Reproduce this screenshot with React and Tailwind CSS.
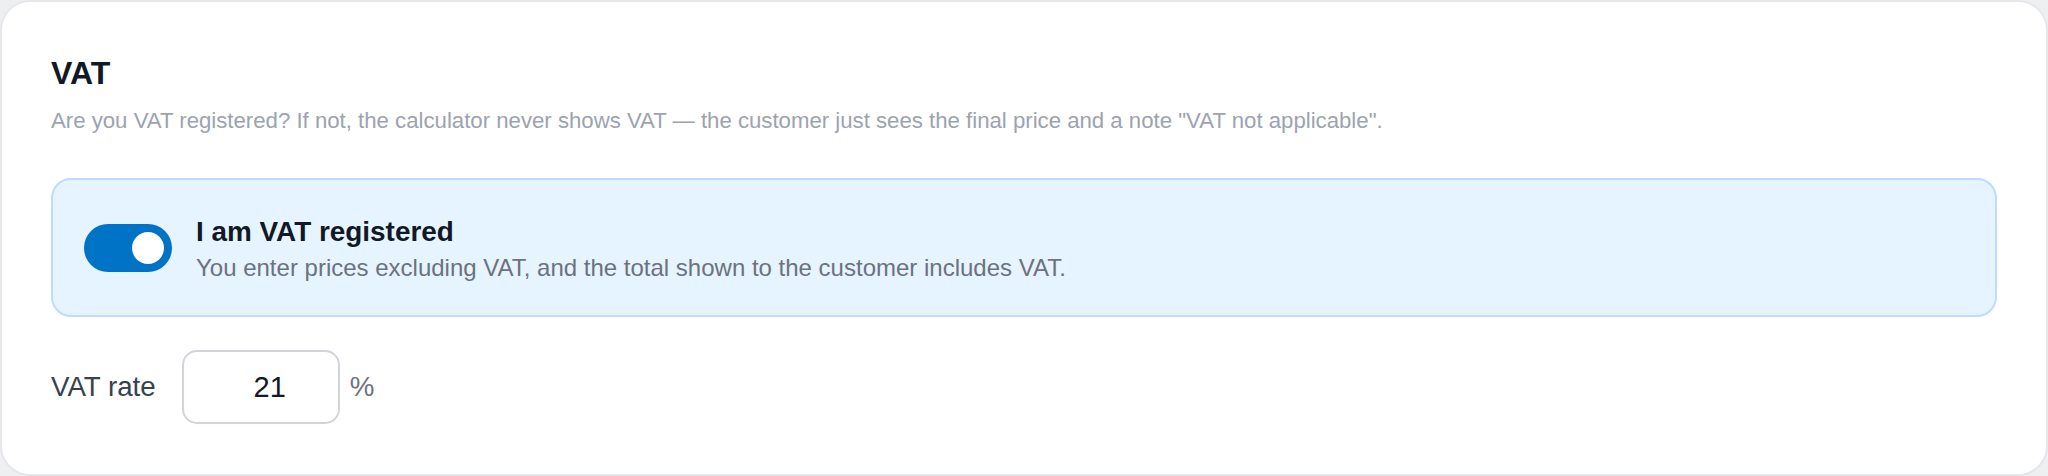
export default function App() {
  return (
    <div className="w-[2048px] h-[476px] bg-[#eeeff1] font-['Liberation_Sans',Arial,sans-serif]">
      <div className="w-[2048px] h-[476px] rounded-[30px] border-2 border-[#e5e7eb] bg-white px-[49px] pt-[51px] flex flex-col">
        <h2 className="text-[32px] leading-[40px] font-bold text-[#111827]">VAT</h2>
        <p className="mt-[12px] text-[22.2px] leading-[32px] text-[#9ca3af]">
          Are you VAT registered? If not, the calculator never shows VAT — the customer just sees the final price and a note "VAT not applicable".
        </p>

        <div className="mt-[41px] h-[139px] rounded-[20px] border-2 border-[#bfdbfe] bg-[#e6f4ff] pl-[31px] flex items-center gap-[24px]">
          <button
            type="button"
            role="switch"
            aria-checked="true"
            className="relative w-[88px] h-[48px] shrink-0 rounded-full bg-[#0073c7]"
          >
            <span className="absolute right-[8px] top-[8px] w-[32px] h-[32px] rounded-full bg-white" />
          </button>
          <div className="pt-[1px] flex flex-col">
            <div className="text-[27.9px] leading-[38px] font-bold text-[#111827]">I am VAT registered</div>
            <div className="mt-[2px] text-[24px] leading-[30px] text-[#6b7280]">
              You enter prices excluding VAT, and the total shown to the customer includes VAT.
            </div>
          </div>
        </div>

        <div className="mt-[33px] flex items-center">
          <label className="text-[27.7px] leading-[36px] text-[#374151]">VAT rate</label>
          <input
            type="text"
            readOnly
            value="21"
            className="ml-[26px] w-[158px] h-[74px] rounded-[15px] border-2 border-[#d1d5db] bg-white pl-[20px] pr-[2px] text-center text-[29px] text-[#111827] outline-none"
          />
          <span className="ml-[10px] text-[27.7px] leading-[36px] text-[#6b7280]">%</span>
        </div>
      </div>
    </div>
  );
}
